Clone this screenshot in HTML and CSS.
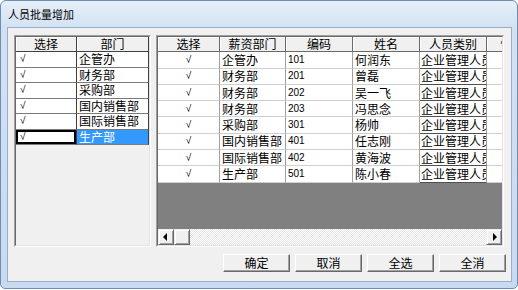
FILE: index.html
```html
<!DOCTYPE html>
<html lang="zh-CN">
<head>
  <meta charset="UTF-8" />
  <title>人员批量增加</title>
  <link rel="stylesheet" href="styles.css">
</head>
<body>
  <div class="window">
    <div class="titlebar">人员批量增加</div>

    <div class="client">
      <div class="panes">
        <!-- Department list -->
        <div class="pane pane-left">
          <div class="pane-inner">
            <table class="grid grid-dept">
              <colgroup><col class="c-pick"><col class="c-dept"></colgroup>
              <thead>
                <tr><th>选择</th><th>部门</th></tr>
              </thead>
              <tbody>
                <tr><td class="check">√</td><td>企管办</td></tr>
                <tr><td class="check">√</td><td>财务部</td></tr>
                <tr><td class="check">√</td><td>采购部</td></tr>
                <tr><td class="check">√</td><td>国内销售部</td></tr>
                <tr><td class="check">√</td><td>国际销售部</td></tr>
                <tr class="current"><td class="check focus">√</td><td class="selected">生产部</td></tr>
              </tbody>
            </table>
          </div>
        </div>

        <!-- Staff list -->
        <div class="pane pane-right">
          <div class="pane-inner">
            <div class="grid-view">
              <table class="grid grid-staff">
                <colgroup>
                  <col class="c-pick"><col class="c-dept"><col class="c-code">
                  <col class="c-name"><col class="c-type"><col class="c-sex">
                </colgroup>
                <thead>
                  <tr><th>选择</th><th>薪资部门</th><th>编码</th><th>姓名</th><th>人员类别</th><th>性别</th></tr>
                </thead>
                <tbody>
                  <tr><td class="check">√</td><td>企管办</td><td class="num">101</td><td>何润东</td><td class="type">企业管理人员</td><td></td></tr>
                  <tr><td class="check">√</td><td>财务部</td><td class="num">201</td><td>曾磊</td><td class="type">企业管理人员</td><td></td></tr>
                  <tr><td class="check">√</td><td>财务部</td><td class="num">202</td><td>吴一飞</td><td class="type">企业管理人员</td><td></td></tr>
                  <tr><td class="check">√</td><td>财务部</td><td class="num">203</td><td>冯思念</td><td class="type">企业管理人员</td><td></td></tr>
                  <tr><td class="check">√</td><td>采购部</td><td class="num">301</td><td>杨帅</td><td class="type">企业管理人员</td><td></td></tr>
                  <tr><td class="check">√</td><td>国内销售部</td><td class="num">401</td><td>任志刚</td><td class="type">企业管理人员</td><td></td></tr>
                  <tr><td class="check">√</td><td>国际销售部</td><td class="num">402</td><td>黄海波</td><td class="type">企业管理人员</td><td></td></tr>
                  <tr><td class="check">√</td><td>生产部</td><td class="num">501</td><td>陈小春</td><td class="type">企业管理人员</td><td></td></tr>
                </tbody>
              </table>
            </div>
            <div class="hscroll">
              <div class="sb-btn"><span class="arrow-left"></span></div>
              <div class="sb-btn sb-thumb"></div>
              <div class="sb-track"></div>
              <div class="sb-btn"><span class="arrow-right"></span></div>
            </div>
          </div>
        </div>
      </div>

      <div class="buttons">
        <button class="btn">确定</button>
        <button class="btn">取消</button>
        <button class="btn">全选</button>
        <button class="btn">全消</button>
      </div>
    </div>
  </div>
</body>
</html>
```

FILE: styles.css
```css
/* Window frame */
body {
  margin: 0;
  background: #ffffff;
  font-family: "Noto Sans CJK SC", sans-serif;
  font-size: 12px;
  color: #000;
}
.window {
  width: 516px;
  height: 287px;
  border: 1px solid #6f8db2;
  border-radius: 6px 6px 5px 5px;
  background: linear-gradient(#e6eff9, #d3e2f3 26px, #c8daef);
  display: flex;
  flex-direction: column;
}
.titlebar {
  height: 26px;
  padding-left: 7px;
  line-height: 26px;
  font-size: 11px;
}
.client {
  flex: 1;
  margin: 0 5px 6px 6px;
  border: 1px solid #98aecb;
  background: #f0f0f0;
  padding: 7px 7px 9px 6px;
  display: flex;
  flex-direction: column;
}

/* Sunken panes */
.panes {
  display: flex;
  gap: 5px;
  height: 212px;
}
.pane {
  box-sizing: border-box;
  border: 1px solid;
  border-color: #a0a0a0 #ffffff #ffffff #a0a0a0;
  min-width: 0;
}
.pane-left {
  width: 137px;
  flex-shrink: 0;
}
.pane-right {
  width: 348px;
  flex-shrink: 0;
}
.pane-inner {
  height: 100%;
  box-sizing: border-box;
  border: 1px solid;
  border-color: #696969 #e3e3e3 #e3e3e3 #696969;
  display: flex;
  flex-direction: column;
  overflow: hidden;
}

/* Grids */
.grid {
  border-collapse: separate;
  border-spacing: 0;
  table-layout: fixed;
}
.grid th,
.grid td {
  padding: 0 2px;
  white-space: nowrap;
  overflow: hidden;
  font-weight: normal;
  line-height: 14px;
  text-align: left;
}
.grid th {
  text-align: center;
  background: #f0f0f0;
  box-shadow: inset 1px 1px #ffffff;
}
.grid td {
  background: #ffffff;
}
.grid .check {
  font-family: "Liberation Sans", sans-serif;
  font-size: 10px;
}
.grid .num {
  font-family: "Liberation Sans", sans-serif;
  font-size: 10px;
}

.grid-dept {
  width: 133px;
}
.grid-dept .c-pick { width: 61px; }
.grid-dept .c-dept { width: 72px; }
.grid-dept th {
  height: 13px;
  border-right: 1px solid #404040;
  border-bottom: 1px solid #404040;
}
.grid-dept td {
  height: 14.5px;
  border-bottom: 1px solid #7a7a7a;
  border-right: 1px solid #404040;
}
.grid-dept .check {
  padding-left: 4px;
}
.grid-dept .focus {
  box-shadow: inset 0 0 0 2px #000;
}
.grid-dept .selected {
  background: #3399ff;
  color: #ffffff;
}

.grid-view {
  flex: 1;
  min-height: 0;
  background: #808080;
  overflow: hidden;
}
.grid-staff {
  width: 381px;
}
.grid-staff .c-pick { width: 62px; }
.grid-staff .c-dept { width: 66px; }
.grid-staff .c-code { width: 67px; }
.grid-staff .c-name { width: 67px; }
.grid-staff .c-type { width: 67px; }
.grid-staff .c-sex { width: 52px; }
.grid-staff th {
  height: 14.3px;
  border-right: 1px solid #696969;
  border-bottom: 1px solid #696969;
}
.grid-staff td {
  height: 15.3px;
  border-right: 1px solid #a0a0a0;
  border-bottom: 1px solid #cfcfcf;
}
.grid-staff .check {
  text-align: center;
}
.grid-staff .type {
  padding-left: 1px;
  border-bottom-color: #505050;
}

/* Horizontal scrollbar */
.hscroll {
  display: flex;
  height: 16px;
  flex-shrink: 0;
  background: repeating-conic-gradient(#ffffff 0 25%, #e4e4e4 0 50%) 0 0 / 2px 2px;
}
.sb-btn {
  width: 16px;
  box-sizing: border-box;
  background: #f0f0f0;
  border: 1px solid;
  border-color: #f0f0f0 #696969 #696969 #f0f0f0;
  box-shadow: inset 1px 1px #ffffff, inset -1px -1px #a0a0a0;
  display: flex;
  align-items: center;
  justify-content: center;
}
.sb-track {
  flex: 1;
}
.arrow-left,
.arrow-right {
  width: 0;
  height: 0;
  border-top: 4px solid transparent;
  border-bottom: 4px solid transparent;
}
.arrow-left {
  border-right: 4px solid #000;
  margin-right: 2px;
}
.arrow-right {
  border-left: 4px solid #000;
  margin-left: 2px;
}

/* Dialog buttons */
.buttons {
  display: flex;
  justify-content: flex-end;
  gap: 5px;
  margin-top: 7px;
  margin-right: -2px;
}
.btn {
  width: 67px;
  height: 18px;
  padding: 0;
  box-sizing: border-box;
  border: 1px solid;
  border-color: #ffffff #696969 #696969 #ffffff;
  box-shadow: inset -1px -1px #a0a0a0;
  background: #f0f0f0;
  font-family: "Noto Sans CJK SC", sans-serif;
  font-size: 12px;
  line-height: 14px;
  color: #000;
}
```
